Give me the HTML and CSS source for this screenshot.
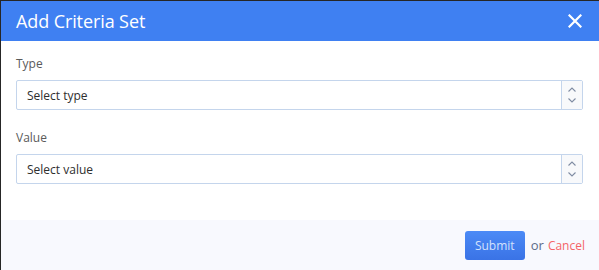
FILE: index.html
```html
<!DOCTYPE html>
<html>
<head>
<meta charset="utf-8">
<link rel="stylesheet" href="styles.css">
</head>
<body>
<div class="modal">
  <div class="header">
    <span class="title">Add Criteria Set</span>
    <svg class="close" width="14" height="14" viewBox="0 0 14 14"><path d="M1.5 1.5 L12.5 12.5 M12.5 1.5 L1.5 12.5" stroke="#fff" stroke-width="2.2" stroke-linecap="square"/></svg>
  </div>
  <div class="body">
    <div class="field">
      <label class="label">Type</label>
      <div class="select">
        <span class="value">Select type</span>
        <span class="spin"><svg width="10" height="20" viewBox="0 0 10 20"><path d="M1.5 6.5 L5 3 L8.5 6.5 M1.5 13.5 L5 17 L8.5 13.5" fill="none" stroke="#7f8ca3" stroke-width="1.1"/></svg></span>
      </div>
    </div>
    <div class="field">
      <label class="label">Value</label>
      <div class="select">
        <span class="value">Select value</span>
        <span class="spin"><svg width="10" height="20" viewBox="0 0 10 20"><path d="M1.5 6.5 L5 3 L8.5 6.5 M1.5 13.5 L5 17 L8.5 13.5" fill="none" stroke="#7f8ca3" stroke-width="1.1"/></svg></span>
      </div>
    </div>
  </div>
  <div class="footer">
    <button class="submit">Submit</button>
    <span class="or">or</span>
    <a class="cancel">Cancel</a>
  </div>
</div>
</body>
</html>
```
FILE: styles.css
```css
html, body { margin: 0; padding: 0; background: #fff; }
body { font-family: "Open Sans", "Noto Sans", sans-serif; }
.modal {
  width: 598px; height: 269px;
  border-top: 1px solid #262626;
  border-left: 1px solid #262626;
  display: flex; flex-direction: column;
  background: #fff;
}
.header {
  height: 40px; background: #3f80f2;
  display: flex; align-items: center; justify-content: space-between;
  padding: 0 17px 0 15px;
}
.title { color: #fff; font-size: 18px; letter-spacing: -0.1px; }
.close { display: block; }
.body { padding: 15px 15px 0 15px; flex: 1; display: flex; flex-direction: column; gap: 20px; }
.field { display: flex; flex-direction: column; }
.label { font-size: 12px; color: #5a5a5a; line-height: 16px; margin-bottom: 8px; }
.select {
  height: 28px; border: 1px solid #c4d5ec; border-radius: 2px;
  display: flex; align-items: stretch;
  width: 565px;
}
.value { flex: 1; font-size: 12px; color: #2e2e2e; padding-left: 10px; display: flex; align-items: center; }
.spin { width: 20px; border-left: 1px solid #c4d5ec; background: #f8f9fb; display: flex; align-items: center; justify-content: center; }
.spin svg { display: block; }
.footer {
  height: 50px; background: #f8f9fe;
  display: flex; align-items: center; justify-content: flex-end;
  padding: 0 14px 0 0;
}
.submit {
  width: 60px; height: 29px; border: none; border-radius: 3px;
  background: linear-gradient(#4b8af6, #3a73e6);
  color: #d4e2fc; font-family: inherit; font-size: 12px; padding: 0;
  margin-right: 6px;
}
.or { font-size: 13px; color: #5d6b88; margin-right: 4px; }
.cancel { font-size: 12px; color: #f56468; }
```
